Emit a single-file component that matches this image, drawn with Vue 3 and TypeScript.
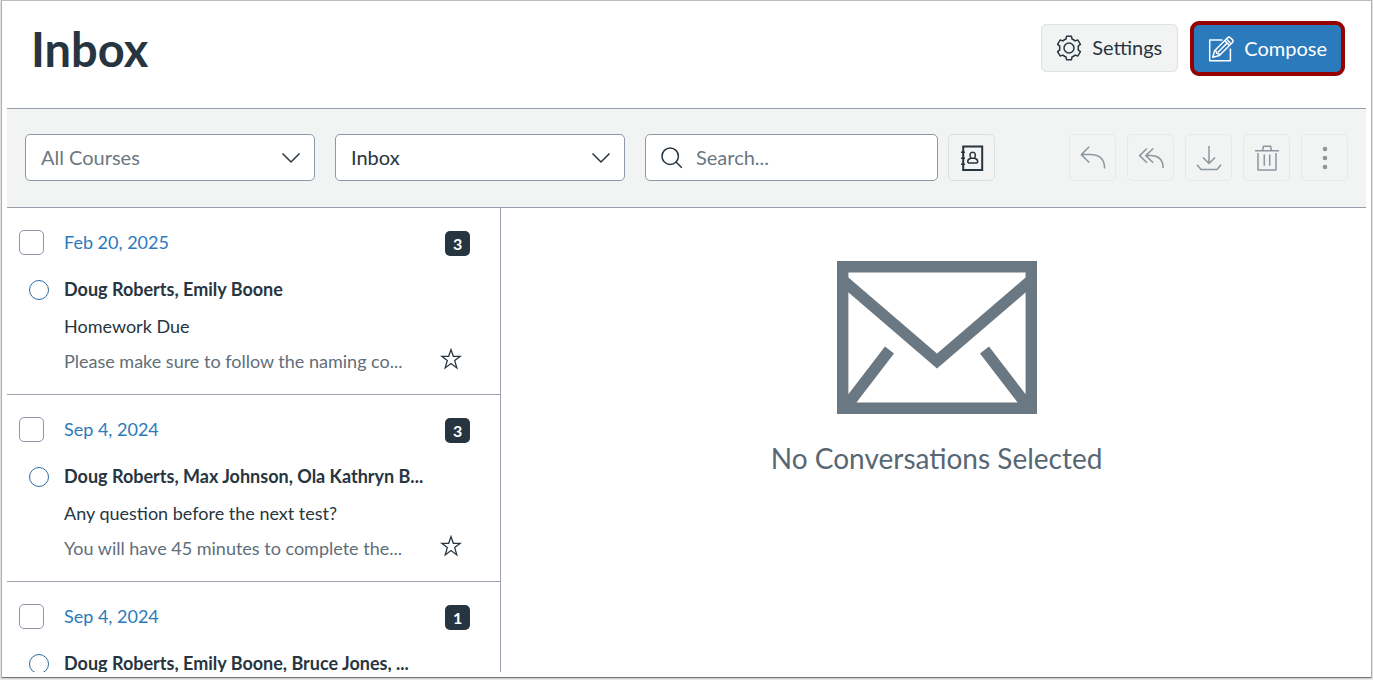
<script setup lang="ts">
import { ref } from 'vue'

interface Conversation {
  id: number
  date: string
  count: number
  people: string
  subject: string
  preview: string
}

const conversations: Conversation[] = [
  {
    id: 1,
    date: 'Feb 20, 2025',
    count: 3,
    people: 'Doug Roberts, Emily Boone',
    subject: 'Homework Due',
    preview: 'Please make sure to follow the naming co...',
  },
  {
    id: 2,
    date: 'Sep 4, 2024',
    count: 3,
    people: 'Doug Roberts, Max Johnson, Ola Kathryn B...',
    subject: 'Any question before the next test?',
    preview: 'You will have 45 minutes to complete the...',
  },
  {
    id: 3,
    date: 'Sep 4, 2024',
    count: 1,
    people: 'Doug Roberts, Emily Boone, Bruce Jones, ...',
    subject: '',
    preview: '',
  },
]

const course = ref('all')
const mailbox = ref('inbox')
const search = ref('')
const selected = ref<number[]>([])
</script>

<template>
  <div class="shell">
    <div class="frame">
      <header class="header">
        <h1 class="title">Inbox</h1>
        <button type="button" class="btn settings">
          <svg class="icon" width="26" height="26" viewBox="-13 -13 26 26" aria-hidden="true">
            <path
              d="M-2.5-11.7H2.5L3-9Q4.5-8.4 6.1-7.1L8.9-8L11.4-3.6L9.2-1.8Q9.5 0 9.2 1.8L11.4 3.6L8.9 8L6.1 7.1Q4.5 8.4 3 9L2.5 11.7H-2.5L-3 9Q-4.5 8.4-6.1 7.1L-8.9 8L-11.4 3.6L-9.2 1.8Q-9.5 0-9.2-1.8L-11.4-3.6L-8.9-8L-6.1-7.1Q-4.5-8.4-3-9Z"
            />
            <circle r="5" />
          </svg>
          <span class="label">Settings</span>
        </button>
        <button type="button" class="btn compose">
          <svg class="icon" width="26" height="26" viewBox="0 0 26 26" aria-hidden="true">
            <path d="M14.5 4H1.7V24.8H22.4V12.5" />
            <path d="M4.8 21.3L6.6 14.8L19.3 2Q20.8 .4 22.4 1.8L24.3 3.6Q25.7 5.2 24.2 6.8L11.4 19.5Z" />
            <path d="M6.6 14.8L8.2 15.2L8.7 17.3L10.9 17.8L11.4 19.5M16.7 4.6L21.5 9.4M18.4 3L23.1 7.8M10 16.2L18.8 7.4" />
          </svg>
          <span class="label">Compose</span>
        </button>
      </header>

      <div class="toolbar">
        <div class="field">
          <select v-model="course" class="control select muted" aria-label="Course">
            <option value="all">All Courses</option>
          </select>
          <svg class="chevron" width="20" height="12" viewBox="0 0 20 12" aria-hidden="true">
            <path d="M1.5 1.5L10 10L18.5 1.5" />
          </svg>
        </div>
        <div class="field">
          <select v-model="mailbox" class="control select" aria-label="Mailbox">
            <option value="inbox">Inbox</option>
          </select>
          <svg class="chevron" width="20" height="12" viewBox="0 0 20 12" aria-hidden="true">
            <path d="M1.5 1.5L10 10L18.5 1.5" />
          </svg>
        </div>
        <div class="field wide">
          <input v-model="search" type="text" class="control search" placeholder="Search..." aria-label="Search" />
          <svg class="lens" width="22" height="22" viewBox="0 0 22 22" aria-hidden="true">
            <circle cx="9.2" cy="9.2" r="8.2" />
            <path d="M15 15L20.8 20.8" />
          </svg>
        </div>
        <button type="button" class="square" aria-label="Address book">
          <svg class="icon" width="26" height="26" viewBox="0 0 26 26" aria-hidden="true">
            <path class="bold" d="M4.2 1.5H23.2V25H4.2Z" />
            <path d="M2 7.3H6M2 13.2H6M2 19.2H6" />
            <path d="M13.7 7.3C11.2 7.3 10.8 9.3 11.2 11.2L11.9 13.3C9.7 13.9 8.7 14.8 8.7 16.4C8.7 17.6 9.6 18 11 18H16.4C17.8 18 18.7 17.6 18.7 16.4C18.7 14.8 17.7 13.9 15.5 13.3L16.2 11.2C16.6 9.3 16.2 7.3 13.7 7.3ZM11.9 13.3H15.5" />
          </svg>
        </button>

        <div class="actions">
          <button type="button" class="square faded" aria-label="Reply">
            <svg class="icon" width="26" height="26" viewBox="0 0 26 26" aria-hidden="true">
              <path d="M9.2 1.8L1.3 9.6L9.2 17.5M1.3 9.6H10C19.5 9.6 24.6 14.5 24.6 23.5" />
            </svg>
          </button>
          <button type="button" class="square faded" aria-label="Reply all">
            <svg class="icon" width="26" height="26" viewBox="0 0 26 26" aria-hidden="true">
              <path d="M9 3.5L1.6 10.6L9 17.8M15.2 3.5L7.8 10.6L15.2 17.8M7.8 10.6H12C20.5 10.6 25.1 15 25.1 23" />
            </svg>
          </button>
          <button type="button" class="square faded" aria-label="Archive">
            <svg class="icon" width="26" height="26" viewBox="0 0 26 26" aria-hidden="true">
              <path d="M13 1V18.5M7 12.5L13 18.5L19 12.5M1 19.8L5 24.5H21L25 19.8" />
            </svg>
          </button>
          <button type="button" class="square faded" aria-label="Delete">
            <svg class="icon" width="26" height="26" viewBox="0 0 26 26" aria-hidden="true">
              <path d="M1 5.7H25M8.6 5.7L9.4 1.2H16.6L17.4 5.7M4 8V24.9H22V8M10.3 9.5V20.8M15.7 9.5V20.8" />
            </svg>
          </button>
          <button type="button" class="square faded" aria-label="More options">
            <svg class="icon dots" width="26" height="26" viewBox="0 0 26 26" aria-hidden="true">
              <circle cx="13" cy="4" r="2.3" />
              <circle cx="13" cy="13" r="2.3" />
              <circle cx="13" cy="22" r="2.3" />
            </svg>
          </button>
        </div>
      </div>

      <main class="content">
        <ul class="list">
          <li v-for="item in conversations" :key="item.id" class="item">
            <div class="top">
              <input
                :id="`conversation-${item.id}`"
                v-model="selected"
                type="checkbox"
                class="check"
                :value="item.id"
              />
              <label class="date" :for="`conversation-${item.id}`">{{ item.date }}</label>
              <span class="badge">{{ item.count }}</span>
            </div>
            <div class="body">
              <button type="button" class="read" aria-label="Mark as unread"></button>
              <div class="texts">
                <p class="people">{{ item.people }}</p>
                <p class="subject">{{ item.subject }}</p>
                <p class="preview">{{ item.preview }}</p>
              </div>
              <button type="button" class="star" aria-label="Star conversation">
                <svg width="22" height="22" viewBox="0 0 22 22" aria-hidden="true">
                  <path d="M11 1.6L13.3 8.3H20.3L14.7 12.6L16.8 19.9L11 15.6L5.2 19.9L7.3 12.6L1.7 8.3H8.7Z" />
                </svg>
              </button>
            </div>
          </li>
        </ul>

        <section class="empty">
          <svg class="envelope" width="200" height="153" viewBox="0 0 200 153" aria-hidden="true">
            <path d="M5.7 5.7H194.3V147.3H5.7ZM5.7 19L100 100L194.3 19M8 147L52.5 89M192 147L147.5 89" />
          </svg>
          <p class="message">No Conversations Selected</p>
        </section>
      </main>
    </div>
  </div>
</template>

<style>
body {
  margin: 0;
  background: #e8e8e8;
}
</style>

<style scoped>
.shell {
  box-sizing: border-box;
  height: 100vh;
  padding: 1px 2px 3px;
  font-family: Lato, "Liberation Sans", sans-serif;
  color: #273540;
}

.frame {
  box-sizing: border-box;
  display: flex;
  flex-direction: column;
  height: 100%;
  padding: 0 5px 5px;
  background: #fff;
  box-shadow: 0 1px 1px #777, 0 0 1px 1px #bbb;
}

.header {
  box-sizing: border-box;
  display: flex;
  flex: none;
  align-items: flex-start;
  gap: 12px;
  padding: 20px 21px 31px 24px;
}

.title {
  flex: 1;
  margin: 0;
  font-size: 47px;
  line-height: 56px;
  font-weight: 700;
}

.btn {
  box-sizing: border-box;
  display: flex;
  align-items: center;
  gap: 10px;
  height: 48px;
  padding: 0 15px 0 14px;
  border: 1px solid #dfe2e4;
  border-radius: 5px;
  background: #f2f4f4;
  color: inherit;
  font: inherit;
  font-size: 20px;
  line-height: 24px;
}

.settings {
  margin-top: 3px;
}

.compose {
  height: 55px;
  padding: 0 14px;
  border: 4px solid #960000;
  border-radius: 9px;
  background: #2b7abc;
  color: #fff;
}

.label {
  padding-bottom: 2px;
}

.icon {
  display: block;
  flex: none;
  fill: none;
  stroke: currentColor;
  stroke-width: 1.5;
  stroke-linejoin: round;
}

.bold {
  stroke-width: 2;
  stroke-linejoin: miter;
}

.dots {
  fill: currentColor;
  stroke: none;
}

.toolbar {
  display: flex;
  flex: none;
  gap: 20px;
  padding: 25px 18px 26px;
  border-top: 1px solid #959eaa;
  border-bottom: 1px solid #959eaa;
  background: #f2f4f4;
}

.field {
  position: relative;
  flex: 0 1 290px;
  min-width: 0;
}

.wide {
  flex-basis: 293px;
}

.control {
  box-sizing: border-box;
  display: block;
  width: 100%;
  height: 47px;
  margin: 0;
  padding: 0 15px 2px;
  border: 1px solid #8d97a5;
  border-radius: 5px;
  background: #fff;
  color: #273540;
  font: inherit;
  font-size: 20px;
  line-height: 24px;
  appearance: none;
}

.muted {
  color: #6a7883;
}

.search {
  padding-left: 50px;
}

.search::placeholder {
  color: #6a7883;
  opacity: 1;
}

.chevron,
.lens {
  position: absolute;
  fill: none;
  stroke: #273540;
  stroke-width: 1.5;
  pointer-events: none;
}

.chevron {
  top: 18px;
  right: 14px;
}

.lens {
  top: 13px;
  left: 16px;
}

.square {
  box-sizing: border-box;
  display: flex;
  flex: none;
  align-items: center;
  justify-content: center;
  width: 47px;
  height: 47px;
  padding: 0;
  border: 1px solid #dcdfe3;
  border-radius: 5px;
  background: transparent;
  color: #273540;
}

.field + .square {
  margin-left: -10px;
}

.faded {
  border-color: #e6e9ea;
  color: #8d969d;
}

.actions {
  display: flex;
  gap: 11px;
  margin-left: auto;
}

.content {
  display: grid;
  flex: 1;
  grid-template-columns: 4fr 7fr;
  min-height: 0;
}

.list {
  margin: 0;
  padding: 0;
  overflow: hidden;
  border-right: 1px solid #98a1ab;
  list-style: none;
}

.item {
  box-sizing: border-box;
  height: 187px;
  padding: 22px 30px 0 12px;
  border-bottom: 1px solid #98a1ab;
}

.top {
  display: flex;
  align-items: flex-start;
}

.check {
  box-sizing: border-box;
  flex: none;
  width: 25px;
  height: 25px;
  margin: 0;
  border: 1px solid #8d97a5;
  border-radius: 5px;
  background: #fff;
  appearance: none;
}

.check:checked {
  background: #273540;
}

.date {
  flex: 1;
  margin-left: 20px;
  color: #2b7abc;
  font-size: 18px;
  line-height: 24px;
}

.badge {
  width: 25px;
  margin-top: 1px;
  border-radius: 5px;
  background: #273540;
  color: #fff;
  font-size: 16px;
  font-weight: 700;
  line-height: 25px;
  text-align: center;
}

.body {
  display: flex;
  align-items: flex-start;
  margin-top: 20px;
  padding-left: 10px;
}

.read {
  box-sizing: border-box;
  flex: none;
  width: 20px;
  height: 20px;
  margin-top: 4px;
  padding: 0;
  border: 1px solid #2f6ba3;
  border-radius: 50%;
  background: transparent;
}

.texts {
  flex: 1;
  min-width: 0;
  margin-left: 15px;
}

.texts p {
  min-height: 26px;
  margin: 0;
  overflow: hidden;
  font-size: 18px;
  line-height: 26px;
  white-space: nowrap;
}

.texts .people {
  font-weight: 700;
}

.texts .subject {
  margin-top: 11px;
}

.texts .preview {
  margin-top: 9px;
  color: #5f6e79;
}

.star {
  align-self: flex-end;
  margin: 0 8px 4px 0;
  padding: 0;
  border: 0;
  background: none;
}

.star svg {
  display: block;
  fill: none;
  stroke: #273540;
  stroke-width: 1.3;
}

.empty {
  display: flex;
  flex-direction: column;
  align-items: center;
  padding: 53px 0 0 6px;
}

.envelope {
  display: block;
  fill: none;
  stroke: #6a7883;
  stroke-width: 11.4;
}

.message {
  margin: 27px 0 0;
  color: #576773;
  font-size: 28px;
  line-height: 34px;
}
</style>
